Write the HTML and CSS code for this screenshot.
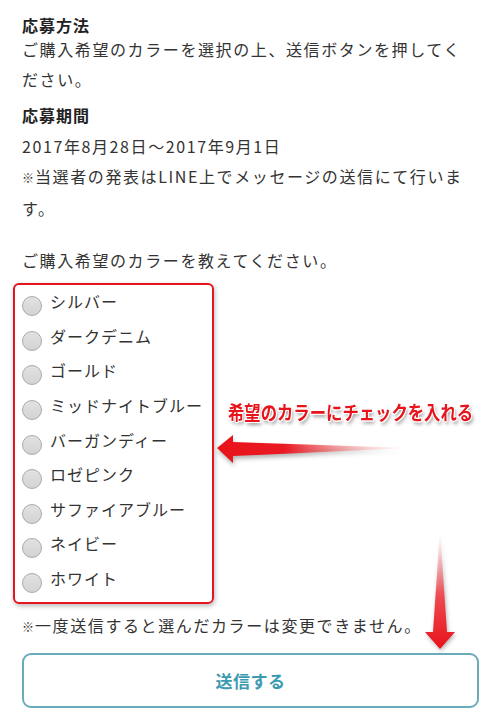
FILE: index.html
```html
<!DOCTYPE html>
<html lang="ja">
<head>
<meta charset="utf-8">
<title>応募フォーム</title>
<link rel="stylesheet" href="styles.css">
</head>
<body>
<div class="page">
  <h2 class="heading first">応募方法</h2>
  <p class="text">ご購入希望のカラーを選択の上、送信ボタンを押してください。</p>
  <h2 class="heading second">応募期間</h2>
  <p class="text date">2017年8月28日〜2017年9月1日</p>
  <p class="text note"><span class="kome">※</span>当選者の発表はLINE上でメッセージの送信にて行います。</p>
  <p class="text question">ご購入希望のカラーを教えてください。</p>

  <div class="choices">
    <label class="choice"><input type="radio" name="color"><span>シルバー</span></label>
    <label class="choice"><input type="radio" name="color"><span>ダークデニム</span></label>
    <label class="choice"><input type="radio" name="color"><span>ゴールド</span></label>
    <label class="choice"><input type="radio" name="color"><span>ミッドナイトブルー</span></label>
    <label class="choice"><input type="radio" name="color"><span>バーガンディー</span></label>
    <label class="choice"><input type="radio" name="color"><span>ロゼピンク</span></label>
    <label class="choice"><input type="radio" name="color"><span>サファイアブルー</span></label>
    <label class="choice"><input type="radio" name="color"><span>ネイビー</span></label>
    <label class="choice"><input type="radio" name="color"><span>ホワイト</span></label>
    <div class="highlight"></div>
  </div>

  <p class="text caution"><span class="kome">※</span>一度送信すると選んだカラーは変更できません。</p>
  <button class="submit" type="button">送信する</button>

  <div class="callout">希望のカラーにチェックを入れる</div>
  <svg class="arrow-left" width="200" height="34" viewBox="0 0 200 34">
    <defs>
      <linearGradient id="gl" x1="0" y1="0" x2="1" y2="0">
        <stop offset="0" stop-color="#e8121a"/>
        <stop offset="0.35" stop-color="#ea1a22"/>
        <stop offset="1" stop-color="#f6b3b6" stop-opacity="0"/>
      </linearGradient>
    </defs>
    <path d="M2 15 L18 2 L18 9 L195 15 L18 23 L18 30 Z" fill="url(#gl)"/>
  </svg>
  <svg class="arrow-down" width="36" height="124" viewBox="0 0 36 124">
    <defs>
      <linearGradient id="gd" x1="0" y1="0" x2="0" y2="1">
        <stop offset="0" stop-color="#f6b3b6" stop-opacity="0"/>
        <stop offset="0.55" stop-color="#ee4a50"/>
        <stop offset="1" stop-color="#e8121a"/>
      </linearGradient>
    </defs>
    <path d="M18 2 L25 104 L33 104 L18 121 L3 104 L11 104 Z" fill="url(#gd)"/>
  </svg>
</div>
</body>
</html>
```

FILE: styles.css
```css
html, body {
  margin: 0;
  padding: 0;
  background: #ffffff;
}

body {
  font-family: "Noto Sans CJK JP", "Noto Sans", sans-serif;
  color: #333333;
}

.page {
  position: relative;
  padding: 16px 22px 0 22px;
  height: 709px;
  box-sizing: border-box;
  overflow: hidden;
}

.heading {
  margin: 0;
  font-size: 16px;
  font-weight: bold;
  line-height: 18px;
  letter-spacing: 1px;
  color: #222222;
}

.heading.second {
  margin-top: 12px;
}

.text {
  margin: 0;
  font-size: 16px;
  line-height: 30px;
  letter-spacing: 1.6px;
}

.kome {
  letter-spacing: 0;
  font-size: 12px;
  margin-right: 1px;
}

.date {
  margin-top: 7px;
}

.question {
  margin-top: 22px;
}

.choices {
  position: relative;
  margin-top: 9px;
  display: flex;
  flex-direction: column;
}

.choice {
  display: flex;
  align-items: center;
  height: 34.6px;
  gap: 8px;
  font-size: 16px;
  letter-spacing: 1px;
  color: #333333;
}

.choice input {
  appearance: none;
  -webkit-appearance: none;
  margin: 10px 0 0 0;
  width: 20px;
  height: 20px;
  border-radius: 50%;
  border: 1px solid #a9a9a9;
  background: linear-gradient(#e2e2e2, #d3d3d3);
  box-sizing: border-box;
  flex: none;
}

.highlight {
  position: absolute;
  left: -9px;
  top: -1px;
  width: 201px;
  height: 321px;
  box-sizing: border-box;
  border: 2px solid #e3161d;
  border-radius: 6px;
  box-shadow: 1px 2px 5px rgba(0, 0, 0, 0.28);
  pointer-events: none;
}

.caution {
  margin-top: 15px;
}

.submit {
  display: block;
  margin-top: 11px;
  width: 457px;
  height: 55px;
  border: 2px solid #6aabbb;
  border-radius: 9px;
  background: #ffffff;
  color: #3b9ab2;
  font-family: "Noto Sans CJK JP", "Noto Sans", sans-serif;
  font-size: 17px;
  font-weight: bold;
  letter-spacing: 0.5px;
}

.callout {
  position: absolute;
  left: 228px;
  top: 398px;
  font-size: 19px;
  font-weight: bold;
  line-height: 28px;
  white-space: nowrap;
  color: #e8141c;
  transform: scaleX(0.86);
  transform-origin: left center;
  text-shadow:
    1px 0 0 #fff, -1px 0 0 #fff, 0 1px 0 #fff, 0 -1px 0 #fff,
    1px 1px 0 #fff, -1px -1px 0 #fff, 1px -1px 0 #fff, -1px 1px 0 #fff,
    2px 3px 4px rgba(0, 0, 0, 0.45);
}

.arrow-left {
  position: absolute;
  left: 215px;
  top: 433px;
  filter: drop-shadow(1px 3px 2px rgba(0, 0, 0, 0.3));
}

.arrow-down {
  position: absolute;
  left: 422px;
  top: 528px;
  filter: drop-shadow(1px 2px 2px rgba(0, 0, 0, 0.3));
}
```
